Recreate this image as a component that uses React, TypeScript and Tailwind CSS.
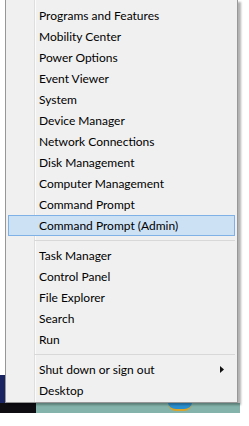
import React from "react";

const group1 = [
  "Programs and Features",
  "Mobility Center",
  "Power Options",
  "Event Viewer",
  "System",
  "Device Manager",
  "Network Connections",
  "Disk Management",
  "Computer Management",
  "Command Prompt",
  "Command Prompt (Admin)",
];
const group2 = ["Task Manager", "Control Panel", "File Explorer", "Search", "Run"];

function Row({ label, active, arrow }: { label: string; active?: boolean; arrow?: boolean }) {
  return (
    <div
      className={
        "mx-[2px] h-[21px] flex items-center pl-[30px] pr-[10px] border " +
        (active ? "bg-[#cde1f5] border-[#7fb1e6]" : "border-transparent")
      }
    >
      <span className="flex-1 text-[12px] leading-none text-black">{label}</span>
      {arrow && (
        <svg width="4" height="7" viewBox="0 0 4 7">
          <path d="M0 0 L4 3.5 L0 7 Z" fill="#111" />
        </svg>
      )}
    </div>
  );
}

function Sep() {
  return (
    <div className="h-[9px] flex items-center pl-[28px] pr-[2px]">
      <div className="flex-1 h-[1px] bg-[#d8d8d8]" />
    </div>
  );
}

export default function App() {
  return (
    <div
      className="w-[249px] h-[426px] bg-white overflow-hidden flex flex-col"
      style={{ fontFamily: 'Lato, "Noto Sans", sans-serif' }}
    >
      <div className="flex h-[403px]">
        <div className="w-[5px] flex flex-col justify-end">
          <div className="h-[28px] bg-[#1b2463]" />
        </div>
        <div className="relative w-[233px] bg-[#f0f0f0] border-l border-r border-b border-[#979797] pt-[5px] shadow-[3px_2px_2px_rgba(0,0,0,0.3)]">
          <div className="absolute left-[28px] top-0 bottom-0 w-[2px] border-l border-[#dedede] bg-[#fbfbfb]" />
          <div className="relative">
            {group1.map((l) => (
              <Row key={l} label={l} active={l === "Command Prompt (Admin)"} />
            ))}
            <Sep />
            {group2.map((l) => (
              <Row key={l} label={l} />
            ))}
            <Sep />
            <Row label="Shut down or sign out" arrow />
            <Row label="Desktop" />
          </div>
        </div>
      </div>
      <div className="flex h-[10px]">
        <div className="w-[36px] bg-[#0d0d12]" />
        <div className="w-[204px] bg-[#83b3ab] flex pl-[132px]">
          <div className="w-[24px] h-[8px] rounded-b-full bg-[#2a8fd0] border-b-2 border-[#d9a52a]" />
        </div>
      </div>
    </div>
  );
}
